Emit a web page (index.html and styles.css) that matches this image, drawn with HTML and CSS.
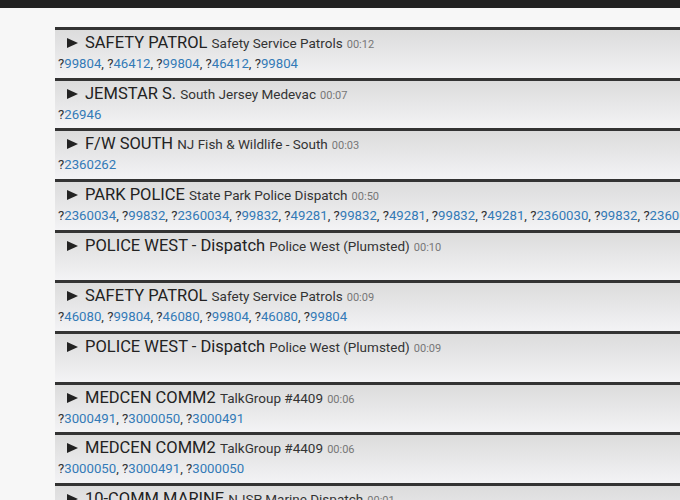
FILE: index.html
```html
<!DOCTYPE html>
<html>
<head>
<meta charset="utf-8">
<link rel="stylesheet" href="styles.css">
</head>
<body>
<div class="topbar"></div>
<div class="page">
  <ul class="calls">
    <li class="call">
      <div class="head"><svg class="tri" width="11" height="10" viewBox="0 0 11 10"><polygon points="0,0 11,5 0,10"/></svg><span class="tg">SAFETY PATROL</span> <span class="desc">Safety Service Patrols</span> <span class="dur">00:12</span></div>
      <div class="units"><span class="q">?</span><a>99804</a>, <span class="q">?</span><a>46412</a>, <span class="q">?</span><a>99804</a>, <span class="q">?</span><a>46412</a>, <span class="q">?</span><a>99804</a></div>
    </li>
    <li class="call">
      <div class="head"><svg class="tri" width="11" height="10" viewBox="0 0 11 10"><polygon points="0,0 11,5 0,10"/></svg><span class="tg">JEMSTAR S.</span> <span class="desc">South Jersey Medevac</span> <span class="dur">00:07</span></div>
      <div class="units"><span class="q">?</span><a>26946</a></div>
    </li>
    <li class="call">
      <div class="head"><svg class="tri" width="11" height="10" viewBox="0 0 11 10"><polygon points="0,0 11,5 0,10"/></svg><span class="tg">F/W SOUTH</span> <span class="desc">NJ Fish &amp; Wildlife - South</span> <span class="dur">00:03</span></div>
      <div class="units"><span class="q">?</span><a>2360262</a></div>
    </li>
    <li class="call">
      <div class="head"><svg class="tri" width="11" height="10" viewBox="0 0 11 10"><polygon points="0,0 11,5 0,10"/></svg><span class="tg">PARK POLICE</span> <span class="desc">State Park Police Dispatch</span> <span class="dur">00:50</span></div>
      <div class="units"><span class="q">?</span><a>2360034</a>, <span class="q">?</span><a>99832</a>, <span class="q">?</span><a>2360034</a>, <span class="q">?</span><a>99832</a>, <span class="q">?</span><a>49281</a>, <span class="q">?</span><a>99832</a>, <span class="q">?</span><a>49281</a>, <span class="q">?</span><a>99832</a>, <span class="q">?</span><a>49281</a>, <span class="q">?</span><a>2360030</a>, <span class="q">?</span><a>99832</a>, <span class="q">?</span><a>2360030</a></div>
    </li>
    <li class="call">
      <div class="head"><svg class="tri" width="11" height="10" viewBox="0 0 11 10"><polygon points="0,0 11,5 0,10"/></svg><span class="tg">POLICE WEST - Dispatch</span> <span class="desc">Police West (Plumsted)</span> <span class="dur">00:10</span></div>
      <div class="units"></div>
    </li>
    <li class="call">
      <div class="head"><svg class="tri" width="11" height="10" viewBox="0 0 11 10"><polygon points="0,0 11,5 0,10"/></svg><span class="tg">SAFETY PATROL</span> <span class="desc">Safety Service Patrols</span> <span class="dur">00:09</span></div>
      <div class="units"><span class="q">?</span><a>46080</a>, <span class="q">?</span><a>99804</a>, <span class="q">?</span><a>46080</a>, <span class="q">?</span><a>99804</a>, <span class="q">?</span><a>46080</a>, <span class="q">?</span><a>99804</a></div>
    </li>
    <li class="call">
      <div class="head"><svg class="tri" width="11" height="10" viewBox="0 0 11 10"><polygon points="0,0 11,5 0,10"/></svg><span class="tg">POLICE WEST - Dispatch</span> <span class="desc">Police West (Plumsted)</span> <span class="dur">00:09</span></div>
      <div class="units"></div>
    </li>
    <li class="call">
      <div class="head"><svg class="tri" width="11" height="10" viewBox="0 0 11 10"><polygon points="0,0 11,5 0,10"/></svg><span class="tg">MEDCEN COMM2</span> <span class="desc">TalkGroup #4409</span> <span class="dur">00:06</span></div>
      <div class="units"><span class="q">?</span><a>3000491</a>, <span class="q">?</span><a>3000050</a>, <span class="q">?</span><a>3000491</a></div>
    </li>
    <li class="call">
      <div class="head"><svg class="tri" width="11" height="10" viewBox="0 0 11 10"><polygon points="0,0 11,5 0,10"/></svg><span class="tg">MEDCEN COMM2</span> <span class="desc">TalkGroup #4409</span> <span class="dur">00:06</span></div>
      <div class="units"><span class="q">?</span><a>3000050</a>, <span class="q">?</span><a>3000491</a>, <span class="q">?</span><a>3000050</a></div>
    </li>
    <li class="call">
      <div class="head"><svg class="tri" width="11" height="10" viewBox="0 0 11 10"><polygon points="0,0 11,5 0,10"/></svg><span class="tg">10-COMM MARINE</span> <span class="desc">NJSP Marine Dispatch</span> <span class="dur">00:01</span></div>
      <div class="units"></div>
    </li>
  </ul>
</div>
</body>
</html>
```

FILE: styles.css
```css
html, body {
  margin: 0;
  padding: 0;
  height: 100%;
  overflow: hidden;
  background: #f7f7f7;
  font-family: Roboto, "Liberation Sans", Arial, sans-serif;
  color: #333;
}
.topbar {
  height: 8px;
  background: #222;
}
.page {
  overflow: hidden;
  padding-top: 19px;
}
.calls {
  list-style: none;
  margin: 0 0 0 55px;
  padding: 0;
}
.call {
  box-sizing: border-box;
  height: 50.67px;
  border-top: 3px solid #333;
  background: linear-gradient(to bottom, #dcdcdc 0%, #e6e6e7 45%, #f3f3f5 100%);
  white-space: nowrap;
  overflow: hidden;
}
.head {
  font-size: 16.5px;
  line-height: 20px;
  padding: 3px 0 0 12px;
  color: #222;
}
.tri {
  fill: #222;
  margin-right: 7px;
  vertical-align: 0px;
}
.tg {
  font-size: 16.5px;
  color: #222;
}
.desc {
  font-size: 13.5px;
  color: #333;
}
.dur {
  font-size: 11px;
  color: #777;
}
.units {
  font-size: 13.2px;
  line-height: 18px;
  padding: 0 0 0 3px;
  color: #333;
}
.units a {
  color: #337ab7;
  text-decoration: none;
}
.q {
  color: #333;
}
```
